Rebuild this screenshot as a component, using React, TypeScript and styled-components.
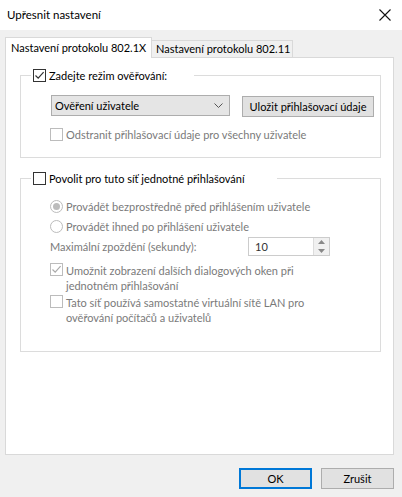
import React from "react";
import styled, { createGlobalStyle } from "styled-components";

const Global = createGlobalStyle`
  html, body { margin: 0; padding: 0; background: #f0f0f0; }
  body { font-family: "Segoe UI", Lato, "Noto Sans", sans-serif; font-size: 11px; color: #000; }
  * { box-sizing: border-box; }
`;

const Window = styled.div`
  width: 402px;
  height: 497px;
  display: flex;
  flex-direction: column;
  background: #f0f0f0;
`;

const TitleBar = styled.div`
  height: 30px;
  background: #fff;
  display: flex;
  align-items: center;
  justify-content: space-between;
  padding: 0 11px 0 7px;
`;

const Title = styled.span`
  font-size: 11.5px;
  line-height: 16px;
`;

const Body = styled.div`
  flex: 1;
  padding: 7px 8px 0 5px;
  display: flex;
  flex-direction: column;
`;

const TabRow = styled.div`
  display: flex;
  align-items: flex-end;
  height: 20px;
`;

const Tab = styled.div<{ $active?: boolean; $w: number }>`
  position: relative;
  z-index: ${(p) => (p.$active ? 2 : 1)};
  width: ${(p) => p.$w}px;
  height: ${(p) => (p.$active ? "21px" : "17px")};
  margin-bottom: ${(p) => (p.$active ? "-1px" : "0")};
  margin-left: ${(p) => (p.$active ? "0" : "-1px")};
  background: ${(p) => (p.$active ? "#fff" : "#f0f0f0")};
  border: 1px solid #d9d9d9;
  border-bottom: none;
  padding: ${(p) => (p.$active ? "2px 0 0 5px" : "0 0 0 4px")};
  display: flex;
  align-items: ${(p) => (p.$active ? "flex-start" : "center")};
  white-space: nowrap;
  line-height: 16px;
`;

const Panel = styled.div`
  height: 398px;
  background: #fff;
  border: 1px solid #d9d9d9;
  padding: 9px 12px 0 14px;
  display: flex;
  flex-direction: column;
  gap: 12px;
`;

const Group = styled.fieldset<{ $h: number }>`
  margin: 0;
  padding: 0;
  border: 1px solid #dcdcdc;
  height: ${(p) => p.$h}px;
  min-width: 0;
`;

const Legend = styled.legend<{ $w: number }>`
  margin-left: 10px;
  padding: 0 0 0 2px;
  width: ${(p) => p.$w}px;
  height: 16px;
  display: flex;
  align-items: center;
  gap: 3px;
  line-height: 16px;
  white-space: nowrap;
`;

const GroupContent = styled.div<{ $pt: number }>`
  padding: ${(p) => p.$pt}px 0 0 29px;
  display: flex;
  flex-direction: column;
`;

const Box = styled.span<{ $disabled?: boolean }>`
  width: 13px;
  height: 13px;
  flex: none;
  border: 1px solid ${(p) => (p.$disabled ? "#bcbcbc" : "#333")};
  background: #fff;
  display: inline-flex;
  align-items: center;
  justify-content: center;
`;

const Check = ({ color }: { color: string }) => (
  <svg width="11" height="11" viewBox="0 0 11 11">
    <path d="M1.5 5.5 L4.2 8.2 L9.6 2.2" fill="none" stroke={color} strokeWidth="1.2" />
  </svg>
);

const CheckBox = ({ checked, disabled }: { checked?: boolean; disabled?: boolean }) => (
  <Box $disabled={disabled}>{checked && <Check color={disabled ? "#aaa" : "#333"} />}</Box>
);

const Radio = styled.span<{ $on?: boolean }>`
  width: 13px;
  height: 13px;
  flex: none;
  border: 1px solid #bcbcbc;
  border-radius: 50%;
  background: #fff;
  display: inline-flex;
  align-items: center;
  justify-content: center;
  &::after {
    content: "";
    display: ${(p) => (p.$on ? "block" : "none")};
    width: 7px;
    height: 7px;
    border-radius: 50%;
    background: #bcbcbc;
  }
`;

const Row = styled.div<{ $mt?: number; $start?: boolean }>`
  display: flex;
  align-items: ${(p) => (p.$start ? "flex-start" : "center")};
  gap: 3px;
  margin-top: ${(p) => p.$mt ?? 0}px;
  line-height: 15px;
  white-space: nowrap;
`;

const Label = styled.span<{ $disabled?: boolean }>`
  color: ${(p) => (p.$disabled ? "#7a7a7a" : "#000")};
  line-height: 15px;
`;

const Select = styled.div`
  width: 179px;
  height: 21px;
  background: #e5e5e5;
  border: 1px solid #adadad;
  display: flex;
  align-items: center;
  justify-content: space-between;
  padding: 0 6px 0 3px;
`;

const Button = styled.div<{ $w: number; $default?: boolean }>`
  width: ${(p) => p.$w}px;
  height: 21px;
  background: #e1e1e1;
  border: ${(p) => (p.$default ? "2px solid #0078d7" : "1px solid #adadad")};
  display: flex;
  align-items: center;
  justify-content: center;
  line-height: 15px;
  white-space: nowrap;
`;

const ControlRow = styled.div`
  display: flex;
  align-items: flex-start;
  gap: 12px;
  margin-left: 1px;
`;

const Spin = styled.div`
  width: 82px;
  height: 19px;
  border: 1px solid #cccccc;
  display: flex;
  background: #fff;
`;

const SpinText = styled.span`
  flex: 1;
  padding-left: 6px;
  line-height: 17px;
  color: #333;
`;

const SpinButtons = styled.div`
  width: 16px;
  border-left: 1px solid #dcdcdc;
  background: #f0f0f0;
  display: flex;
  flex-direction: column;
  align-items: center;
  justify-content: space-around;
`;

const DelayRow = styled.div`
  display: flex;
  align-items: center;
  justify-content: space-between;
  width: 280px;
  margin-top: 3px;
`;

const Footer = styled.div`
  display: flex;
  justify-content: flex-end;
  gap: 9px;
  padding-top: 13px;
`;

export default function App() {
  return (
    <Window>
      <Global />
      <TitleBar>
        <Title>Upřesnit nastavení</Title>
        <svg width="12" height="12" viewBox="0 0 12 12">
          <path d="M0.5 0.5 L11.5 11.5 M11.5 0.5 L0.5 11.5" stroke="#111" strokeWidth="1.1" />
        </svg>
      </TitleBar>
      <Body>
        <TabRow>
          <Tab $active $w={147}>Nastavení protokolu 802.1X</Tab>
          <Tab $w={142}>Nastavení protokolu 802.11</Tab>
        </TabRow>
        <Panel>
          <Group $h={91}>
            <Legend $w={163}>
              <CheckBox checked />
              <Label>Zadejte režim ověřování:</Label>
            </Legend>
            <GroupContent $pt={12}>
              <ControlRow>
                <Select>
                  <span>Ověření uživatele</span>
                  <svg width="9" height="5" viewBox="0 0 9 5">
                    <path d="M0.5 0.5 L4.5 4.5 L8.5 0.5" fill="none" stroke="#555" strokeWidth="1" />
                  </svg>
                </Select>
                <Button $w={132} style={{ marginTop: 1 }}>Uložit přihlašovací údaje</Button>
              </ControlRow>
              <Row $mt={10}>
                <CheckBox disabled />
                <Label $disabled>Odstranit přihlašovací údaje pro všechny uživatele</Label>
              </Row>
            </GroupContent>
          </Group>
          <Group $h={182}>
            <Legend $w={246}>
              <CheckBox />
              <Label>Povolit pro tuto síť jednotné přihlašování</Label>
            </Legend>
            <GroupContent $pt={13}>
              <Row>
                <Radio $on />
                <Label $disabled>Provádět bezprostředně před přihlášením uživatele</Label>
              </Row>
              <Row $mt={5}>
                <Radio />
                <Label $disabled>Provádět ihned po přihlášení uživatele</Label>
              </Row>
              <DelayRow>
                <Label $disabled>Maximální zpoždění (sekundy):</Label>
                <Spin>
                  <SpinText>10</SpinText>
                  <SpinButtons>
                    <svg width="7" height="4" viewBox="0 0 7 4"><path d="M0 4 L3.5 0 L7 4 Z" fill="#888" /></svg>
                    <svg width="7" height="4" viewBox="0 0 7 4"><path d="M0 0 L3.5 4 L7 0 Z" fill="#888" /></svg>
                  </SpinButtons>
                </Spin>
              </DelayRow>
              <Row $mt={7} $start>
                <CheckBox checked disabled />
                <Label $disabled>
                  Umožnit zobrazení dalších dialogových oken při
                  <br />
                  jednotném přihlašování
                </Label>
              </Row>
              <Row $mt={2} $start>
                <CheckBox disabled />
                <Label $disabled>
                  Tato síť používá samostatné virtuální sítě LAN pro
                  <br />
                  ověřování počítačů a uživatelů
                </Label>
              </Row>
            </GroupContent>
          </Group>
        </Panel>
        <Footer>
          <Button $w={73} $default>OK</Button>
          <Button $w={73}>Zrušit</Button>
        </Footer>
      </Body>
    </Window>
  );
}
